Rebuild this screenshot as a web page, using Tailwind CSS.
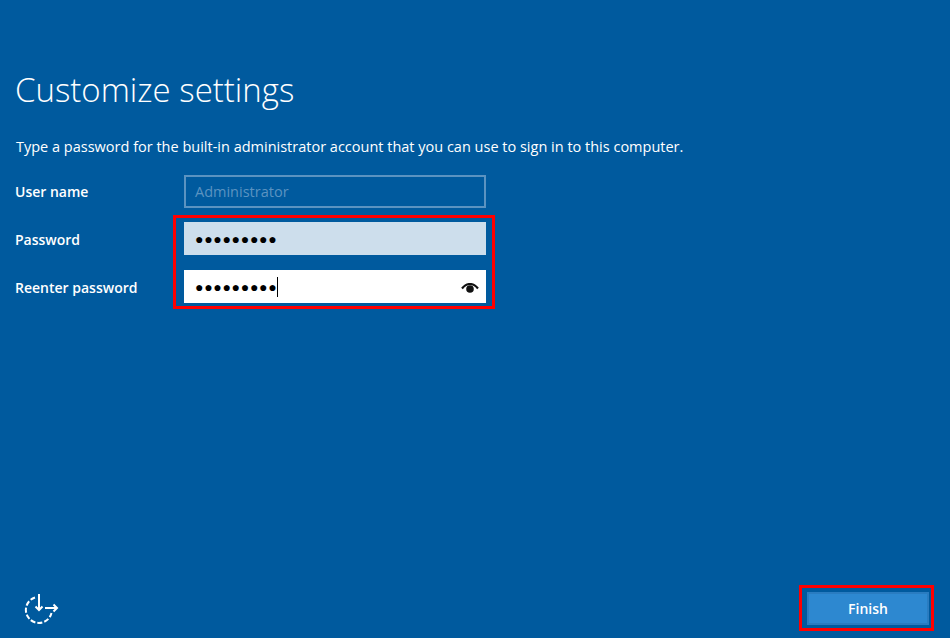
<!DOCTYPE html>
<html lang="en">
<head>
    <meta charset="UTF-8">
    <title>Customize settings</title>
    <script src="https://cdn.jsdelivr.net/npm/@tailwindcss/browser@4"></script>
</head>
<body class="bg-[#005a9e] overflow-hidden">
    <div class="flex flex-col h-[638px] w-[950px] font-['Open_Sans',sans-serif] text-white">
        <!-- Heading -->
        <div class="pl-[15px] pt-[67px]">
            <h1 class="text-[33px] leading-[46px] font-light">Customize settings</h1>
            <p class="mt-[24px] pl-[1px] text-[14.5px] leading-[20px]">Type a password for the built-in administrator account that you can use to sign in to this computer.</p>
        </div>

        <!-- Form -->
        <div class="flex mt-[18px] pl-[15px]">
            <div class="w-[158px] text-[14px] font-semibold">
                <div class="h-[33px] leading-[33px]">User name</div>
                <div class="h-[33px] leading-[33px] mt-[15px]">Password</div>
                <div class="h-[33px] leading-[33px] mt-[15px]">Reenter password</div>
            </div>
            <div class="w-[322px]">
                <div class="ml-[11px] w-[302px] h-[33px] border-2 border-[#5b93c1] px-[9px] text-[14.5px] leading-[29px] text-[#5b93c1]">Administrator</div>
                <!-- Red callout around the password fields -->
                <div class="mt-[7px] h-[94px] border-[3px] border-[#ff0000] pl-[8px] pt-[4px]">
                    <div class="flex items-center w-[302px] h-[33px] bg-[#cddeec] pl-[11px]">
                        <span class="text-[14px] tracking-[0.7px] text-black">●●●●●●●●●</span>
                    </div>
                    <div class="flex items-center w-[302px] h-[33px] mt-[15px] bg-white pl-[11px] pr-[7px]">
                        <span class="text-[14px] tracking-[0.7px] text-black border-r border-black leading-[20px]">●●●●●●●●●</span>
                        <svg class="ml-auto mt-[3px]" width="18" height="10" viewBox="0 0 18 10">
                            <path d="M1 5.500C3.500 2.500 6 1 9 1s5.500 1.500 8 4.500" fill="none" stroke="#111" stroke-width="2.200"/>
                            <path d="M5.200 6a3.800 3.800 0 0 1 7.600 0a3.800 3.800 0 0 1-7.600 0z" fill="#111"/>
                        </svg>
                    </div>
                </div>
            </div>
        </div>

        <!-- Footer -->
        <div class="flex items-center justify-between mt-auto pl-[23px] pr-[16px] pb-[7px]">
            <svg width="36" height="32" viewBox="0 0 36 32" fill="none" stroke="#fff" stroke-width="2">
                <path d="M12 5.500A13 13 0 1 0 28.500 21" stroke-dasharray="5 2"/>
                <path d="M16 2v16M12.500 14.500 16 18l3.500-3.500"/>
                <path d="M22 16h12M30.500 12.500 34 16l-3.500 3.500"/>
            </svg>
            <div class="w-[135px] h-[46px] border-[3px] border-[#ff0000] pl-[5px] pt-[4px]">
                <button class="block w-[122px] h-[33px] bg-[#2d88d0] border-2 border-[#2a7cc0] text-[14px] font-semibold text-white">Finish</button>
            </div>
        </div>
    </div>
</body>
</html>
